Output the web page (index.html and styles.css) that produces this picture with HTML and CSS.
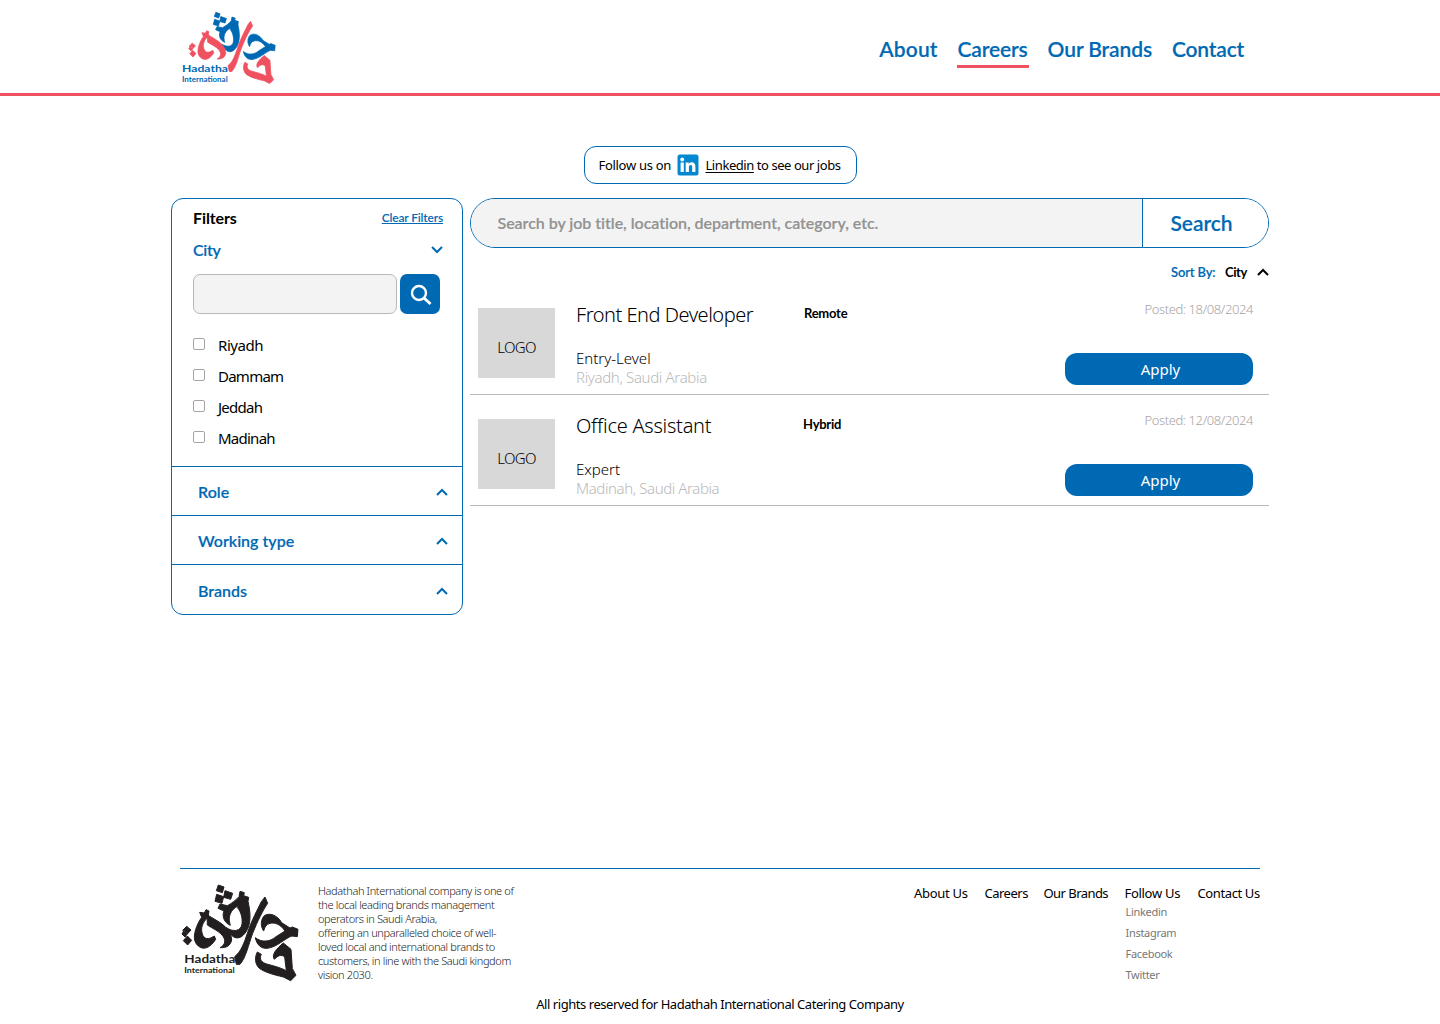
FILE: index.html
```
<!DOCTYPE html>
<html lang="en">
<head>
<meta charset="utf-8">
<title>Hadatha International - Careers</title>
<link rel="stylesheet" href="styles.css">
</head>
<body>
<svg class="defs" aria-hidden="true">
  <defs>
    <g id="mark">
      <g class="ink-blue">
        <path d="M145 75l17 6-5 17-18-6zM165 92l23 8-6 18-21-6zM140 103l21 7-5 20-21-6z"/>
        <path d="M144 145L150 132L172 137C185 130 197 121 207 110L210 94L223 98L221 107L236 112L232 136C215 132 198 138 188 150C178 162 175 177 181 196C163 188 155 170 162 153Z"/>
        <path d="M208 125L234 125C239 145 243 172 237 195C230 220 212 240 193 232C181 225 173 214 169 203C190 217 213 214 216 192C218 175 213 155 203 144Z"/>
        <path d="M283 167C298 157 322 165 335 188L360 204L367 201L384 208L382 230L366 228C345 234 322 262 291 265C272 266 260 253 256 233C275 248 300 246 318 230L345 213C331 192 314 187 300 190C290 192 284 200 281 213C270 197 273 177 283 167Z"/>
      </g>
      <g class="ink-red">
        <path d="M50 199l13 11-11 12-14-11zM42 211l-6 11 9 9 8-11zM52 228l13 13-12 14-13-13z"/>
        <path d="M89 157L103 159L108 149L117 153L114 172C98 186 91 204 97 222C102 238 115 240 133 228L137 238C122 263 100 272 85 258C69 245 71 223 80 200C85 187 91 178 95 172Z"/>
        <path d="M111 164L144 184C167 198 184 216 185 240C181 258 169 264 150 263C166 255 169 240 156 225C145 212 128 206 112 195Z"/>
        <path d="M285 111L293 130C279 150 262 185 248 220C235 255 228 293 210 313L199 313L194 290C213 275 222 250 232 220C245 180 262 150 274 125Z"/>
        <path d="M262 276L274 283C266 298 276 308 290 312C312 318 332 323 349 332L344 291C334 281 322 288 313 298C303 285 320 265 340 249L363 268L367 326L378 346L362 362L340 351C310 344 285 337 268 325C254 312 254 291 262 276Z"/>
      </g>
    </g>
    <symbol id="up" viewBox="0 0 12 8"><path d="M1 7l5-5 5 5" fill="none" stroke="currentColor" stroke-width="2"/></symbol>
    <symbol id="down" viewBox="0 0 12 8"><path d="M1 1l5 5 5-5" fill="none" stroke="currentColor" stroke-width="2"/></symbol>
  </defs>
</svg>

<header class="top">
  <div class="top-inner">
    <svg class="logo" viewBox="33 30 288 228" role="img" aria-label="Hadatha International">
      <use href="#mark" transform="translate(57 37) scale(.745) translate(-37 -75)"/>
      <text x="36" y="215" font-size="29" textLength="138" lengthAdjust="spacingAndGlyphs">Hadatha</text>
      <text x="36" y="247" font-size="20" textLength="137" lengthAdjust="spacingAndGlyphs">International</text>
    </svg>
    <nav class="main-nav">
      <a class="about">About</a><a class="active">Careers</a><a>Our Brands</a><a class="contact">Contact</a>
    </nav>
  </div>
</header>

<div class="follow">
  <span>Follow us on</span>
  <svg width="22" height="22" viewBox="0 0 22 22"><rect x=".5" y=".5" width="21" height="21" rx="2.5" fill="#0288d1"/><circle cx="5.2" cy="5.5" r="1.9" fill="#fff"/><path d="M3.600 8.500h3.200V18H3.600zM8.700 8.500h3V10c.7-1.100 1.700-1.700 3-1.700 2.500 0 3.700 1.600 3.700 4.200V18h-3.200v-4.900c0-1.300-.5-2-1.500-2s-1.800.8-1.800 2.100V18H8.700z" fill="#fff"/></svg>
  <span class="follow-text"><u>Linkedin</u> to see our jobs</span>
</div>

<main class="content">
  <aside class="filters">
    <section class="city">
      <div class="row head"><h2>Filters</h2><a>Clear Filters</a></div>
      <div class="row city-title"><h3>City</h3><svg width="12" height="8"><use href="#down"/></svg></div>
      <div class="city-search">
        <input type="text" aria-label="City">
        <button aria-label="Search city"><svg width="22" height="22" viewBox="0 0 22 22"><circle cx="9" cy="9" r="7" fill="none" stroke="#fff" stroke-width="2.400"/><path d="M14 14l6.500 6" stroke="#fff" stroke-width="3"/></svg></button>
      </div>
      <ul>
        <li><i></i><span>Riyadh</span></li>
        <li><i></i><span class="snug">Dammam</span></li>
        <li><i></i><span class="snug">Jeddah</span></li>
        <li><i></i><span class="snug">Madinah</span></li>
      </ul>
    </section>
    <div class="row group"><h3>Role</h3><svg width="12" height="8"><use href="#up"/></svg></div>
    <div class="row group"><h3>Working type</h3><svg width="12" height="8"><use href="#up"/></svg></div>
    <div class="row group last"><h3>Brands</h3><svg width="12" height="8"><use href="#up"/></svg></div>
  </aside>

  <section class="results">
    <div class="search"><div class="field">Search by job title, location, department, category, etc.</div><button>Search</button></div>
    <div class="sort"><span class="label">Sort By:</span><span class="value">City</span><svg width="12" height="8"><use href="#up"/></svg></div>
    <article class="job">
      <div class="pic">LOGO</div>
      <div class="info"><h2>Front End Developer</h2><p>Entry-Level</p><p class="place">Riyadh, Saudi Arabia</p></div>
      <strong>Remote</strong>
      <div class="side"><time>Posted: 18/08/2024</time><button>Apply</button></div>
    </article>
    <article class="job second">
      <div class="pic">LOGO</div>
      <div class="info"><h2>Office Assistant</h2><p>Expert</p><p class="place">Madinah, Saudi Arabia</p></div>
      <strong>Hybrid</strong>
      <div class="side"><time>Posted: 12/08/2024</time><button>Apply</button></div>
    </article>
  </section>
</main>

<footer class="bottom">
  <div class="bottom-row">
    <svg class="logo dark" viewBox="33 72 354 294" role="img" aria-label="Hadatha International">
      <use href="#mark"/>
      <text x="43" y="310" font-size="31" textLength="153" lengthAdjust="spacingAndGlyphs">Hadatha</text>
      <text x="43" y="339" font-size="21" textLength="151" lengthAdjust="spacingAndGlyphs">International</text>
    </svg>
    <p class="blurb">Hadathah International company is one of<br>the local leading brands management<br>operators in Saudi Arabia,<br>offering an unparalleled choice of well-<br>loved local and international brands to<br>customers, in line with the Saudi kingdom<br>vision 2030.</p>
    <nav class="foot-nav">
      <div class="f1">About Us</div><div class="f2">Careers</div><div class="f3">Our Brands</div>
      <div class="f4">Follow Us<ul><li>Linkedin</li><li>Instagram</li><li>Facebook</li><li>Twitter</li></ul></div>
      <div class="f5">Contact Us</div>
    </nav>
  </div>
  <p class="copy">All rights reserved for Hadathah International Catering Company</p>
</footer>
</body>
</html>
```
FILE: styles.css
```
:root { --blue: #0069b4; --red: #ef5160; }
* { box-sizing: border-box; margin: 0; padding: 0; }
body { height: 1024px; display: flex; flex-direction: column; background: #fff; color: #000; font-family: "Noto Sans", sans-serif; white-space: nowrap; }
ul { list-style: none; }
svg { display: block; flex: none; }
.defs { display: none; }
button { border: 0; font-family: inherit; }
h3, .main-nav, .search, .head, strong, .sort { font-family: Lato, sans-serif; font-weight: 600; }
h3, .main-nav, .search { -webkit-text-stroke: .15px currentColor; }

.top { height: 96px; border-bottom: 3px solid var(--red); }
.top-inner { display: flex; justify-content: space-between; padding: 10px 196px 0 181px; }
.logo { width: 96px; height: 76px; font-family: Lato, sans-serif; font-weight: 700; fill: var(--blue); }
.ink-blue { fill: var(--mark-a, var(--blue)); stroke: var(--mark-a, var(--blue)); stroke-width: 3; }
.ink-red { fill: var(--mark-b, var(--red)); stroke: var(--mark-b, var(--red)); stroke-width: 3; }
.main-nav { display: flex; padding-top: 23px; gap: 20px; font-size: 21px; line-height: 32px; color: var(--blue); letter-spacing: -.1px; }
.main-nav a { height: 35px; }
.main-nav .about { letter-spacing: .1px; }
.main-nav .active { width: 72px; border-bottom: 3px solid var(--red); padding: 0 1px; margin: 0 -1px 0 -1px; letter-spacing: -.15px; }
.main-nav .contact { letter-spacing: -.2px; }

.follow { align-self: center; width: 273px; height: 38px; margin-top: 50px; padding-left: 14px; display: flex; align-items: center; border: 1px solid var(--blue); border-radius: 12px; font-size: 13px; letter-spacing: -.3px; }
.follow span:first-child { width: 78.500px; }
.follow-text { margin-left: 6.500px; letter-spacing: -.44px; }
.follow u { text-underline-offset: 2px; text-decoration-thickness: 1px; }

.content { display: flex; gap: 7px; margin: 14px 171px 0; }
.filters { width: 292px; height: 417px; border: 1px solid var(--blue); border-radius: 12px; }
.row { display: flex; justify-content: space-between; align-items: center; }
.filters h3 { font-size: 16px; color: var(--blue); }
.row svg { color: var(--blue); }
.city { height: 268px; border-bottom: 1px solid var(--blue); padding: 3px 19px 0 21px; }
.head { height: 31px; }
.head h2 { font-size: 16px; font-weight: 700; letter-spacing: -.1px; }
.head a { font-size: 12px; color: var(--blue); text-decoration: underline; letter-spacing: -.17px; padding-bottom: 1px; }
.city-title { height: 32px; }
.city-title h3 { letter-spacing: -.3px; }
.city-title svg { margin-top: 1px; }
.city-search { display: flex; gap: 3px; margin-top: 9px; }
.city-search input { width: 204px; height: 40px; border: 1px solid #b8b8b8; border-radius: 7px; background: #f3f3f3; }
.city-search button { display: flex; align-items: flex-start; width: 40px; height: 40px; border-radius: 7px; background: var(--blue); padding: 10px 0 0 10px; }
.city ul { margin-top: 15px; font-size: 15px; letter-spacing: -.45px; }
.city li { display: flex; align-items: center; gap: 13px; height: 31px; }
.city i { width: 12px; height: 12px; margin-top: -1px; border: 1px solid #aaa3a6; border-radius: 2px; }
.city .snug { letter-spacing: -.75px; }
.group { height: 49px; border-bottom: 1px solid var(--blue); padding: 1px 14px 0 26px; }
.last { border: 0; padding-top: 2px; }

.results { width: 799px; }
.search { display: flex; height: 50px; border: 1px solid var(--blue); border-radius: 25px; overflow: hidden; }
.field { width: 671px; padding-left: 26.500px; background: #f3f3f3; color: #929292; font-size: 16px; line-height: 47px; letter-spacing: -.04px; }
.search button { flex: 1; background: #fff; border-left: 1px solid var(--blue); color: var(--blue); font: 600 21px/48px Lato, sans-serif; letter-spacing: -.05px; padding-right: 8px; }
.sort { display: flex; justify-content: flex-end; align-items: center; height: 36px; padding-top: 12px; font-size: 13px; }
.sort .label { color: var(--blue); width: 54px; letter-spacing: -.15px; -webkit-text-stroke: .15px currentColor; }
.sort .value { width: 32px; font-weight: 700; letter-spacing: -.45px; }
.job { display: flex; height: 111px; border-bottom: 1px solid #b9b9b9; padding-left: 8px; }
.pic { width: 77px; height: 70px; margin-top: 24px; padding-top: 4px; background: #d8d8d8; text-align: center; font-weight: 300; font-size: 15px; line-height: 70px; letter-spacing: -.7px; }
.info { width: 228px; margin-left: 21px; padding-top: 18px; font-weight: 300; font-size: 15px; line-height: 19px; }
.info h2 { font-weight: 300; font-size: 20px; line-height: 26px; margin-bottom: 20.500px; letter-spacing: -.47px; }
.info .place { color: #b9b9b9; letter-spacing: -.34px; }
.job.second h2 { letter-spacing: -.25px; }
.job.second .place { letter-spacing: -.4px; }
.job strong { width: 261px; padding-top: 19px; font-size: 13px; line-height: 20px; font-weight: 700; letter-spacing: -.25px; }
.second strong { margin-left: -1px; width: 262px; }
.side { width: 188px; padding-top: 15px; text-align: right; }
.side time { display: block; height: 54px; line-height: 20px; font-size: 13px; font-weight: 300; color: #aaa2a2; letter-spacing: -.4px; }
.side button { display: block; width: 188px; height: 32px; border-radius: 12px; background: var(--blue); color: #fff; font-size: 15px; padding: 0 0 0 3px; }

.bottom { margin: auto 180px 9px; border-top: 1px solid var(--blue); height: 147px; display: flex; flex-direction: column; justify-content: space-between; }
.bottom-row { display: flex; height: 113px; padding-top: 15px; }
.dark { width: 118px; height: 98px; margin-left: 1px; fill: #231f20; --mark-a: #231f20; --mark-b: #231f20; }
.blurb { margin-left: 19px; font-size: 11px; line-height: 14px; font-weight: 300; letter-spacing: -.37px; color: #222; }
.foot-nav { margin-left: auto; display: flex; font-size: 13px; line-height: 18px; letter-spacing: -.3px; }
.f1 { width: 70.500px; } .f2 { width: 59px; letter-spacing: -.5px; } .f3 { width: 81px; letter-spacing: -.55px; } .f4 { width: 73px; } .f5 { width: 62.500px; letter-spacing: -.38px; }
.foot-nav ul { margin-top: -1px; padding-left: 1px; font-size: 11px; line-height: 21px; color: #777; }
.copy { text-align: center; font-size: 13px; line-height: 20px; letter-spacing: -.45px; padding-bottom: 1px; }
```
